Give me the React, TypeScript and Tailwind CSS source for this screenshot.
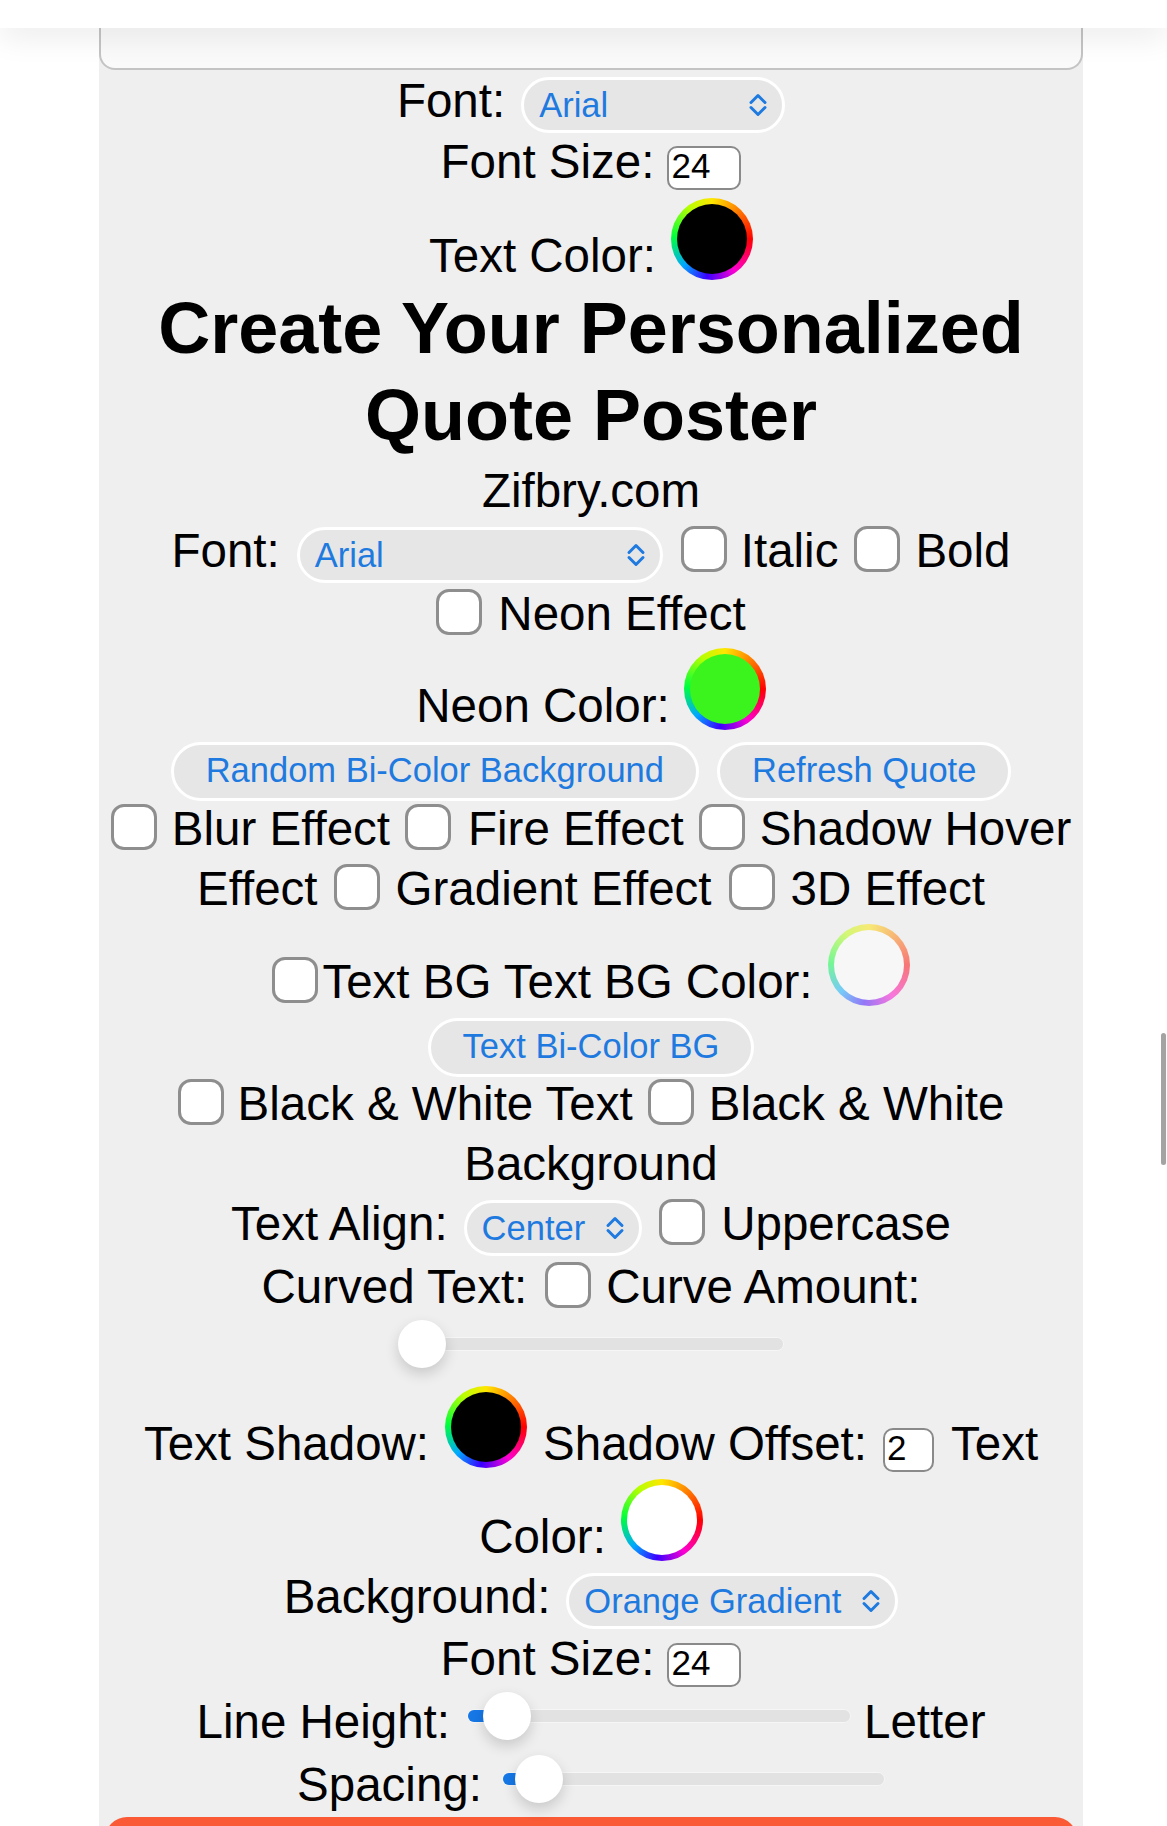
import React from "react";

const ring =
  "bg-[conic-gradient(#ffe600,#ff7a00_12%,#ff0000_25%,#ff00d0_40%,#3a00ff_52%,#00a8ff_63%,#00ff3c_76%,#b8ff00_90%,#ffe600)]";

function Check({ className = "" }: { className?: string }) {
  return (
    <span
      className={`inline-block h-[46px] w-[46px] rounded-[13px] border-[3px] border-[#8e8e8e] bg-white align-[-5px] ${className}`}
    />
  );
}

function Well({ fill, className = "" }: { fill: string; className?: string }) {
  return (
    <span
      className={`inline-block h-[82px] w-[82px] rounded-full p-[6px] align-[-8px] ${ring} ${className}`}
    >
      <span className={`block h-full w-full rounded-full ${fill}`} />
    </span>
  );
}

function Chevron() {
  return (
    <svg width="20" height="26" viewBox="0 0 20 26" fill="none" className="shrink-0">
      <path
        d="M3 10.5 10 3.5l7 7M3 15.5l7 7 7-7"
        stroke="#1f7ae0"
        strokeWidth="3"
        strokeLinecap="round"
        strokeLinejoin="round"
      />
    </svg>
  );
}

function Select({ label, className = "" }: { label: string; className?: string }) {
  return (
    <span
      className={`inline-flex h-[56px] items-center justify-between rounded-full border-[3px] border-white bg-[#e6e6e6] pl-[15px] pr-[14px] align-baseline text-[34.5px] text-[#1f7ae0] ${className}`}
    >
      <span className="leading-[34px]">{label}</span>
      <span className="ml-[20px] flex">
        <Chevron />
      </span>
    </span>
  );
}

function NumberBox({ value, className = "" }: { value: string; className?: string }) {
  return (
    <span
      className={`inline-block h-[44px] rounded-[10px] border-2 border-[#8a8a8a] bg-white pl-[2px] text-left text-[35px] leading-[36px] ${className}`}
    >
      {value}
    </span>
  );
}

function Button({ label, className = "" }: { label: string; className?: string }) {
  return (
    <span
      className={`inline-block h-[59px] rounded-full border-[3px] border-white bg-[#e6e6e6] px-[32px] align-baseline text-[34.5px] leading-[50px] text-[#1f7ae0] ${className}`}
    >
      {label}
    </span>
  );
}

function Slider({
  className,
  trackClass,
  thumbClass,
  fillClass,
}: {
  className: string;
  trackClass: string;
  thumbClass: string;
  fillClass?: string;
}) {
  return (
    <span className={`relative inline-block h-[48px] align-[-2px] ${className}`}>
      <span className={`mt-[17px] block h-[14px] rounded-full border border-[#f6f6f6] bg-[#e2e2e2] ${trackClass}`} />
      {fillClass && (
        <span className={`absolute left-[1px] top-[18px] h-[12px] rounded-l-full bg-[#1677e6] ${fillClass}`} />
      )}
      <span
        className={`absolute top-0 h-[48px] w-[48px] rounded-full bg-white shadow-[0_6px_14px_rgba(0,0,0,0.16)] ${thumbClass}`}
      />
    </span>
  );
}

const row = "whitespace-nowrap text-center leading-[52px]";

export default function App() {
  return (
    <div className="relative h-[1826px] w-[1167px] overflow-hidden bg-white font-['Liberation_Sans',Arial,sans-serif] text-[47.5px] text-black">
      <div className="ml-[99px] h-full w-[984px] bg-[#efefef]">
        <div className="h-[70px] rounded-b-[16px] border-2 border-t-0 border-[#c4c4c4] bg-[#fafafa]" />

        <div className={`${row} mt-[5px] h-[61px]`}>
          <span>Font:</span>
          <Select label="Arial" className="ml-[16px] w-[264px]" />
        </div>
        <div className={`${row} h-[62px]`}>
          <span>Font Size:</span>
          <NumberBox value="24" className="ml-[13px] w-[74px]" />
        </div>
        <div className={`${row} h-[87px]`}>
          <span>Text Color:</span>
          <Well fill="bg-black" className="ml-[15px]" />
        </div>

        <h1 className="h-[180px] text-center text-[72px] font-bold leading-[87px]">
          Create Your Personalized
          <br />
          Quote Poster
        </h1>

        <div className={`${row} h-[60px]`}>Zifbry.com</div>

        <div className={`${row} h-[63px]`}>
          <span>Font:</span>
          <Select label="Arial" className="ml-[17px] w-[366px]" />
          <Check className="ml-[18px]" />
          <span className="ml-[14px]">Italic</span>
          <Check className="ml-[16px]" />
          <span className="ml-[15px]">Bold</span>
        </div>
        <div className={`${row} h-[60px]`}>
          <Check />
          <span className="ml-[16px]">Neon Effect</span>
        </div>
        <div className={`${row} h-[92px]`}>
          <span>Neon Color:</span>
          <Well fill="bg-[#3bf41e]" className="ml-[14px]" />
        </div>
        <div className={`${row} h-[63px]`}>
          <Button label="Random Bi-Color Background" />
          <Button label="Refresh Quote" className="ml-[18px]" />
        </div>

        <div className={`${row} h-[60px]`}>
          <Check />
          <span className="ml-[15px]">Blur Effect</span>
          <Check className="ml-[15px]" />
          <span className="ml-[17px]">Fire Effect</span>
          <Check className="ml-[15px]" />
          <span className="ml-[15px]">Shadow Hover</span>
        </div>
        <div className={`${row} h-[61px]`}>
          <span>Effect</span>
          <Check className="ml-[16px]" />
          <span className="ml-[16px]">Gradient Effect</span>
          <Check className="ml-[17px]" />
          <span className="ml-[16px]">3D Effect</span>
        </div>
        <div className={`${row} h-[92px]`}>
          <Check />
          <span className="ml-[4px]">Text BG Text BG Color:</span>
          <Well fill="bg-white" className="ml-[15px] opacity-50" />
        </div>
        <div className={`${row} h-[62px]`}>
          <Button label="Text Bi-Color BG" />
        </div>
        <div className={`${row} h-[60px]`}>
          <Check />
          <span className="ml-[14px]">Black &amp; White Text</span>
          <Check className="ml-[15px]" />
          <span className="ml-[15px]">Black &amp; White</span>
        </div>
        <div className={`${row} h-[60px]`}>Background</div>
        <div className={`${row} h-[63px]`}>
          <span>Text Align:</span>
          <Select label="Center" className="ml-[16px]" />
          <Check className="ml-[17px]" />
          <span className="ml-[16px]">Uppercase</span>
        </div>
        <div className={`${row} h-[56px]`}>
          <span>Curved Text:</span>
          <Check className="ml-[18px]" />
          <span className="ml-[15px]">Curve Amount:</span>
        </div>
        <div className="flex h-[69px] justify-center pt-[3px]">
          <Slider className="w-[386px]" trackClass="ml-[2px]" thumbClass="left-0" />
        </div>

        <div className={`${row} h-[93px]`}>
          <span>Text Shadow:</span>
          <Well fill="bg-black" className="ml-[16px]" />
          <span className="ml-[16px]">Shadow Offset:</span>
          <NumberBox value="2" className="ml-[16px] w-[51px]" />
          <span className="ml-[17px]">Text</span>
        </div>
        <div className={`${row} h-[92px]`}>
          <span>Color:</span>
          <Well fill="bg-white" className="ml-[15px]" />
        </div>
        <div className={`${row} h-[62px]`}>
          <span>Background:</span>
          <Select label="Orange Gradient" className="ml-[16px]" />
        </div>
        <div className={`${row} h-[59px]`}>
          <span>Font Size:</span>
          <NumberBox value="24" className="ml-[13px] w-[74px]" />
        </div>
        <div className={`${row} h-[63px]`}>
          <span>Line Height:</span>
          <Slider className="ml-[17px] w-[384px]" trackClass="" thumbClass="left-[16px]" fillClass="w-[36px]" />
          <span className="ml-[13px]">Letter</span>
        </div>
        <div className={`${row} h-[62px]`}>
          <span>Spacing:</span>
          <Slider className="ml-[20px] w-[383px]" trackClass="" thumbClass="left-[13px]" fillClass="w-[32px]" />
        </div>

        <div className="mx-[6px] h-[80px] rounded-t-[22px] bg-[#fa5a36]" />
      </div>

      <div className="pointer-events-none absolute left-0 top-0 h-[28px] w-full bg-white shadow-[0_10px_30px_rgba(0,0,0,0.08)]" />
      <div className="pointer-events-none absolute left-[1161px] top-[1033px] h-[132px] w-[5px] rounded-full bg-[#a3a3a3]" />
    </div>
  );
}
